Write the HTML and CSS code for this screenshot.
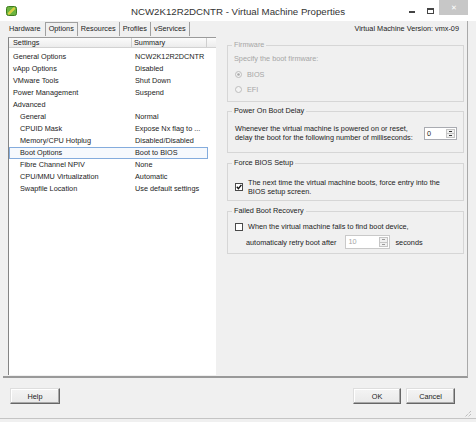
FILE: index.html
```html
<!DOCTYPE html>
<html>
<head>
  <title>Virtual Machine Properties</title>
  <link rel="stylesheet" href="styles.css">
</head>
<body>
  <div class="window">
    <div class="titlebar">
      <svg class="app-icon" width="11" height="10" viewBox="0 0 11 10">
        <rect x="0.5" y="0.5" width="10" height="9" rx="2" fill="#6cb33f" stroke="#3f7d1e"/>
        <path d="M3 7.5 L8 2.5" stroke="#e9dc4c" stroke-width="2.4" stroke-linecap="round"/>
        <path d="M3 7.5 L8 2.5" stroke="#b5a52a" stroke-width="0.6" stroke-linecap="round"/>
      </svg>
      <div class="title">NCW2K12R2DCNTR - Virtual Machine Properties</div>
      <div class="controls">
        <span class="ctl-min"></span>
        <span class="ctl-max"></span>
        <span class="ctl-close">&#x2715;</span>
      </div>
    </div>

    <div class="client">
      <div class="tabbar">
        <div class="tabs">
          <span class="tab first">Hardware</span>
          <span class="tab active">Options</span>
          <span class="tab">Resources</span>
          <span class="tab">Profiles</span>
          <span class="tab">vServices</span>
        </div>
        <div class="version">Virtual Machine Version: vmx-09</div>
      </div>

      <div class="page">
        <div class="settings-list">
          <div class="list-head">
            <span class="col-name">Settings</span>
            <span class="col-sum">Summary</span>
          </div>
          <div class="list-body">
            <div class="row"><span class="col-name">General Options</span><span class="col-sum">NCW2K12R2DCNTR</span></div>
            <div class="row"><span class="col-name">vApp Options</span><span class="col-sum">Disabled</span></div>
            <div class="row"><span class="col-name">VMware Tools</span><span class="col-sum">Shut Down</span></div>
            <div class="row"><span class="col-name">Power Management</span><span class="col-sum">Suspend</span></div>
            <div class="row"><span class="col-name">Advanced</span><span class="col-sum"></span></div>
            <div class="row sub"><span class="col-name">General</span><span class="col-sum">Normal</span></div>
            <div class="row sub"><span class="col-name">CPUID Mask</span><span class="col-sum">Expose Nx flag to ...</span></div>
            <div class="row sub"><span class="col-name">Memory/CPU Hotplug</span><span class="col-sum">Disabled/Disabled</span></div>
            <div class="row sub selected"><span class="col-name">Boot Options</span><span class="col-sum">Boot to BIOS</span></div>
            <div class="row sub"><span class="col-name">Fibre Channel NPIV</span><span class="col-sum">None</span></div>
            <div class="row sub"><span class="col-name">CPU/MMU Virtualization</span><span class="col-sum">Automatic</span></div>
            <div class="row sub"><span class="col-name">Swapfile Location</span><span class="col-sum">Use default settings</span></div>
          </div>
        </div>

        <div class="detail">
          <fieldset class="group disabled">
            <legend>Firmware</legend>
            <div class="hint">Specify the boot firmware:</div>
            <div class="radio-row first-radio">
              <svg width="7" height="7" viewBox="0 0 7 7"><circle cx="3.5" cy="3.5" r="3" fill="#f4f4f4" stroke="#bdbdbd"/><circle cx="3.5" cy="3.5" r="1.3" fill="#a8a8a8"/></svg>
              <span>BIOS</span>
            </div>
            <div class="radio-row">
              <svg width="7" height="7" viewBox="0 0 7 7"><circle cx="3.5" cy="3.5" r="3" fill="#f4f4f4" stroke="#bdbdbd"/></svg>
              <span>EFI</span>
            </div>
          </fieldset>

          <fieldset class="group delay">
            <legend>Power On Boot Delay</legend>
            <div class="delay-row">
              <div class="text-block">Whenever the virtual machine is powered on or reset,<br>delay the boot for the following number of milliseconds:</div>
              <div class="spin spin-delay">
                <span class="spin-value">0</span>
                <span class="spin-btns"><span class="spin-up"></span><span class="spin-down"></span></span>
              </div>
            </div>
          </fieldset>

          <fieldset class="group force">
            <legend>Force BIOS Setup</legend>
            <div class="check-row">
              <span class="checkbox checked">
                <svg width="6" height="6" viewBox="0 0 6 6"><path d="M0.8 2.8 L2.4 4.6 L5.4 0.9" fill="none" stroke="#111" stroke-width="1.4"/></svg>
              </span>
              <div class="text-block">The next time the virtual machine boots, force entry into the<br>BIOS setup screen.</div>
            </div>
          </fieldset>

          <fieldset class="group recovery">
            <legend>Failed Boot Recovery</legend>
            <div class="check-row single">
              <span class="checkbox"></span>
              <div class="text-block">When the virtual machine fails to find boot device,</div>
            </div>
            <div class="retry-row">
              <span>automaticaly retry boot after</span>
              <div class="spin spin-retry off">
                <span class="spin-value">10</span>
                <span class="spin-btns"><span class="spin-up"></span><span class="spin-down"></span></span>
              </div>
              <span>seconds</span>
            </div>
          </fieldset>
        </div>
      </div>
    </div>

    <div class="footer">
      <button class="btn btn-help">Help</button>
      <div class="spacer"></div>
      <button class="btn btn-ok">OK</button>
      <button class="btn btn-cancel">Cancel</button>
      <svg class="grip" width="9" height="9" viewBox="0 0 9 9">
        <path d="M8 2 L2 8 M8 5 L5 8 M8 8 L8 8" stroke="#a8a8a8" stroke-width="1" stroke-dasharray="1 1"/>
      </svg>
    </div>
  </div>
</body>
</html>
```

FILE: styles.css
```css
body {
  margin: 0;
  font-family: "Liberation Sans", Arial, sans-serif;
  font-size: 7.3px;
  color: #1c1c1c;
}

.window {
  position: relative;
  width: 476px;
  height: 422px;
  background-color: #f0f0f0;
  overflow: hidden;
}

/* title bar */
.titlebar {
  height: 21px;
  background-color: #fff;
  display: grid;
  grid-template-columns: 1fr auto 1fr;
  align-items: center;
}

.app-icon {
  margin-left: 6px;
  margin-top: 1px;
}

.title {
  font-size: 9.7px;
  color: #333;
  padding-top: 1px;
}

.controls {
  justify-self: end;
  align-self: start;
  display: flex;
  align-items: flex-start;
  margin-right: 8px;
}

.ctl-min {
  width: 6px;
  height: 2px;
  margin-top: 11px;
  background-color: #444;
}

.ctl-max {
  width: 5px;
  height: 3px;
  margin: 8px 0 0 12px;
  border: 1px solid #444;
  border-top-width: 2px;
}

.ctl-close {
  width: 29px;
  height: 15px;
  margin-left: 5px;
  background-color: #c7c7c7;
  color: #fff;
  font-size: 7px;
  line-height: 15px;
  text-align: center;
}

/* tab strip + page */
.client {
  margin: 0 8px 0 3px;
  border-right: 1px solid #a9a9a9;
  border-bottom: 2px solid #999;
}

.tabbar {
  display: flex;
  height: 15px;
  padding: 0 8px 0 3px;
}

.tabs {
  display: flex;
  height: 14px;
  margin-top: 1px;
}

.tab {
  padding: 0 3px;
  line-height: 14px;
  border-right: 1px solid #a0a0a0;
  white-space: nowrap;
}

.tab.first {
  padding-right: 4px;
  border-right: none;
}

.tab.active {
  line-height: 12px;
  border: 1px solid #a0a0a0;
  border-bottom: none;
}

.version {
  margin-left: auto;
  line-height: 14px;
  margin-top: 1px;
}

.page {
  display: flex;
  height: 340px;
  padding-left: 5px;
}

/* settings list */
.settings-list {
  width: 208px;
  height: 338px;
  margin-top: 1px;
  background-color: #fff;
  border-left: 1px solid #848484;
  border-top: 1px solid #9a9a9a;
  box-sizing: border-box;
}

.list-head {
  display: flex;
  height: 9px;
  line-height: 9px;
  background: linear-gradient(#fbfbfb, #ececec);
  border-bottom: 1px solid #d2d2d2;
}

.list-head .col-name {
  width: 123px;
  padding-left: 4px;
  border-right: 1px solid #cfcfcf;
  box-sizing: border-box;
}

.list-head .col-sum {
  width: 75px;
  padding-left: 2px;
  border-right: 1px solid #cfcfcf;
  box-sizing: border-box;
}

.list-body {
  padding-top: 3px;
}

.row {
  display: flex;
  width: 199px;
  height: 12px;
  line-height: 10px;
  border: 1px solid transparent;
  box-sizing: border-box;
  white-space: nowrap;
}

.row .col-name {
  width: 123px;
  padding-left: 3px;
  box-sizing: border-box;
}

.row.sub .col-name {
  padding-left: 10px;
}

.row .col-sum {
  padding-left: 2px;
}

.row.selected {
  border-color: #84acdd;
  background-color: #f6f9fd;
}

/* detail pane */
.detail {
  flex: 1;
  padding: 4px 3px 0 11px;
}

.group {
  margin: 0 0 5px;
  padding: 0 4px;
  border: 1px solid #d6d6d6;
  min-width: 0;
}

.group legend {
  padding: 0 2px;
  line-height: 10px;
}

.group.disabled {
  margin-bottom: 4px;
  padding-bottom: 4px;
  color: #a6a6a6;
}

.hint {
  margin-top: 4px;
  padding-left: 2px;
  line-height: 9px;
}

.radio-row {
  display: flex;
  align-items: center;
  height: 15px;
  padding-left: 3px;
}

.radio-row.first-radio {
  margin-top: 4px;
}

.radio-row svg {
  margin-right: 5px;
}

.text-block {
  line-height: 9px;
  white-space: nowrap;
}

.group.delay {
  padding-bottom: 10px;
}

.delay-row {
  display: flex;
  align-items: center;
  margin-top: 8px;
  padding: 0 2px 0 3px;
}

.spin {
  display: flex;
  height: 13px;
  background-color: #fff;
  border: 1px solid #a9abb1;
  box-sizing: border-box;
}

.spin-delay {
  width: 33px;
  margin-left: auto;
}

.spin-value {
  flex: 1;
  padding-left: 2px;
  line-height: 11px;
}

.spin-btns {
  display: flex;
  flex-direction: column;
  width: 9px;
  margin: 1px;
}

.spin-up,
.spin-down {
  flex: 1;
  position: relative;
  background-color: #f0f0f0;
  border: 1px solid #c5c5c5;
}

.spin-down {
  border-top: none;
}

.spin-up::after,
.spin-down::after {
  content: "";
  position: absolute;
  left: 2px;
  top: 1px;
  width: 3px;
  height: 1px;
  background-color: #333;
}

.group.force {
  padding-bottom: 4px;
}

.check-row {
  display: flex;
  align-items: center;
  margin-top: 10px;
  padding-left: 3px;
}

.check-row.single {
  margin-top: 6px;
}

.checkbox {
  display: flex;
  align-items: center;
  justify-content: center;
  width: 8px;
  height: 8px;
  margin-right: 5px;
  background-color: #fff;
  border: 1px solid #4a4a4a;
  box-sizing: border-box;
}

.group.recovery {
  padding-bottom: 4px;
}

.retry-row {
  display: flex;
  align-items: center;
  height: 14px;
  margin-top: 4px;
  padding-left: 14px;
}

.spin-retry {
  width: 45px;
  height: 14px;
  margin: 0 5px 0 9px;
  border-color: #c9c9c9;
}

.spin.off .spin-value {
  color: #a6a6a6;
  line-height: 12px;
}

.spin.off .spin-up::after,
.spin.off .spin-down::after {
  background-color: #9a9a9a;
}

/* footer buttons */
.footer {
  display: flex;
  height: 30px;
  padding: 10px 21px 0 10px;
  border-bottom: 1px solid #c4c4c4;
}

.spacer {
  flex: 1;
}

.btn {
  height: 16px;
  padding: 0;
  font-family: "Liberation Sans", Arial, sans-serif;
  font-size: 7.3px;
  color: #1c1c1c;
  background: linear-gradient(#f4f4f4, #e9e9e9);
  border: 1px solid;
  border-color: #dedede #666 #666 #dedede;
  box-shadow: inset -1px -1px #a8a8a8, inset 1px 1px #fff;
}

.btn-help {
  width: 50px;
}

.btn-ok {
  width: 48px;
}

.btn-cancel {
  width: 49px;
  margin-left: 5px;
}

.grip {
  position: absolute;
  right: 4px;
  bottom: 4px;
}
```
